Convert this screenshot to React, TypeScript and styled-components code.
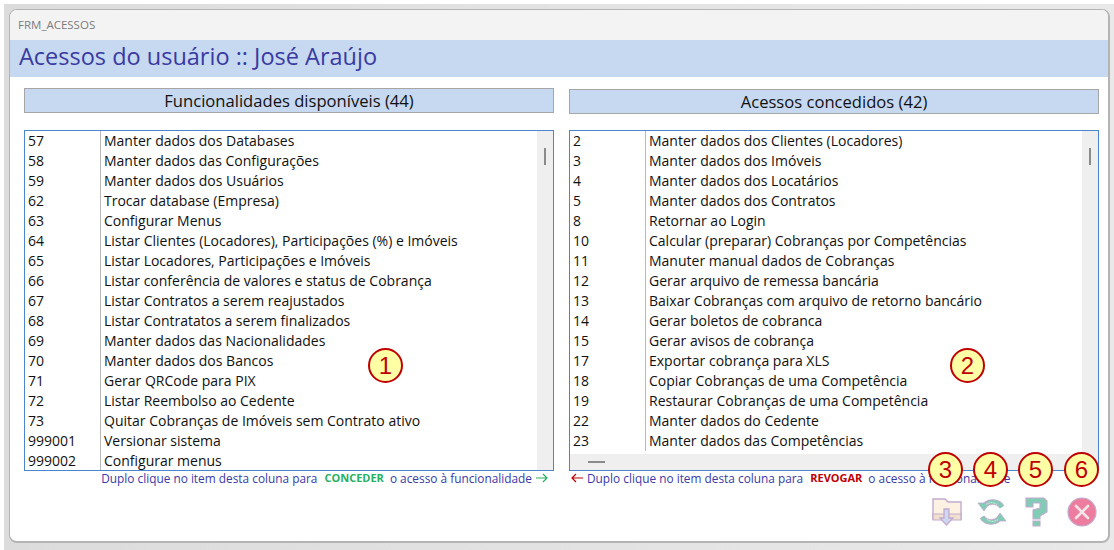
import React from "react";
import styled, { createGlobalStyle } from "styled-components";

const Global = createGlobalStyle`
  html, body { margin: 0; padding: 0; background: #fff; }
  #root { width: 1114px; height: 550px; overflow: hidden; }
`;

const FONT = `"Open Sans", "Noto Sans", "Liberation Sans", sans-serif`;

const Backdrop = styled.div`
  width: 1110px;
  height: 546px;
  margin: 4px 0 0 4px;
  padding: 5px 0 0 5px;
  box-sizing: border-box;
  background: linear-gradient(90deg, #dcdcdc 0, #e9e9e9 100%);
`;

const Win = styled.div`
  width: 1101px;
  height: 534px;
  box-sizing: border-box;
  border: 1px solid #b4b4b4;
  border-right-width: 2px;
  border-bottom-width: 2px;
  border-radius: 8px;
  background: #fff;
  overflow: hidden;
  display: flex;
  flex-direction: column;
  font-family: ${FONT};
`;

const TitleBar = styled.div`
  height: 30px;
  flex: none;
  background: #f3f3f3;
  color: #7c7c7c;
  font-size: 11.5px;
  line-height: 30px;
  padding-left: 8px;
`;

const Banner = styled.h1`
  height: 37px;
  flex: none;
  margin: 0;
  background: #c6d9f1;
  color: #3a3aa2;
  font-family: ${FONT};
  font-weight: 400;
  font-size: 23.5px;
  line-height: 33px;
  padding-left: 9px;
`;

const Columns = styled.div`
  display: flex;
  gap: 15px;
  padding: 11px 0 0 14px;
`;

const Column = styled.section`
  width: 530px;
  position: relative;
  display: flex;
  flex-direction: column;
`;

const PanelTitle = styled.div<{ $drop?: boolean }>`
  height: 25px;
  box-sizing: border-box;
  margin: ${(p) => (p.$drop ? "1px 0 16px" : "0 0 17px")};
  background: #c6d9f1;
  border: 1px solid #a6a6a6;
  color: #111;
  font-size: 16.6px;
  line-height: 23px;
  text-align: center;
`;

const ListBox = styled.div`
  height: 341px;
  box-sizing: border-box;
  border: 1px solid #4a86d0;
  display: flex;
  flex-direction: column;
  background: #fff;
`;

const ListMain = styled.div`
  flex: 1;
  min-height: 0;
  display: flex;
`;

const Rows = styled.div`
  flex: 1;
  min-width: 0;
  overflow: hidden;
`;

const Row = styled.div`
  display: flex;
  height: 20px;
  font-size: 14px;
  line-height: 20px;
  color: #111;
  white-space: nowrap;
`;

const IdCell = styled.div`
  width: 76px;
  flex: none;
  box-sizing: border-box;
  padding-left: 3px;
  border-right: 1px solid #b9b9b9;
`;

const NameCell = styled.div`
  padding-left: 3px;
`;

const VScroll = styled.div`
  width: 16px;
  flex: none;
  background: #efefef;
  padding: 17px 0 0 7px;
  box-sizing: border-box;
`;

const VThumb = styled.div`
  width: 2px;
  height: 17px;
  background: #8b8b8b;
`;

const HScroll = styled.div`
  height: 16px;
  flex: none;
  background: #efefef;
  padding: 7px 0 0 18px;
  box-sizing: border-box;
`;

const HThumb = styled.div`
  width: 17px;
  height: 2px;
  background: #8b8b8b;
`;

const Note = styled.div<{ $end?: boolean }>`
  display: flex;
  justify-content: ${(p) => (p.$end ? "flex-end" : "flex-start")};
  align-items: center;
  gap: 4px;
  height: 13px;
  padding: ${(p) => (p.$end ? "0 6px 0 0" : "0 0 0 2px")};
  color: #3a3aa8;
  font-size: 11.85px;
  white-space: pre;
`;

const Strong = styled.b<{ $c: string }>`
  color: ${(p) => p.$c};
  font-weight: 700;
  font-size: 11px;
  margin: 0 2px 0 3px;
`;

const Marker = styled.div<{ $x: number; $y: number }>`
  position: absolute;
  left: ${(p) => p.$x}px;
  top: ${(p) => p.$y}px;
  width: 35px;
  height: 35px;
  box-sizing: border-box;
  border: 2px solid #c00000;
  border-radius: 50%;
  background: #ffffa6;
  color: #c00000;
  font-family: "Liberation Sans", Arial, sans-serif;
  font-size: 24px;
  line-height: 31px;
  text-align: center;
`;

const Footer = styled.div`
  display: flex;
  justify-content: flex-end;
  align-items: center;
  gap: 15px;
  padding: 13px 11px 0 0;
`;

const IconBtn = styled.button`
  border: 0;
  padding: 0;
  width: 30px;
  height: 30px;
  background: none;
  opacity: 0.88;
  svg { display: block; }
`;

const left: [string, string][] = [
  ["57", "Manter dados dos Databases"],
  ["58", "Manter dados das Configurações"],
  ["59", "Manter dados dos Usuários"],
  ["62", "Trocar database (Empresa)"],
  ["63", "Configurar Menus"],
  ["64", "Listar Clientes (Locadores), Participações (%) e Imóveis"],
  ["65", "Listar Locadores, Participações e Imóveis"],
  ["66", "Listar conferência de valores e status de Cobrança"],
  ["67", "Listar Contratos a serem reajustados"],
  ["68", "Listar Contratatos a serem finalizados"],
  ["69", "Manter dados das Nacionalidades"],
  ["70", "Manter dados dos Bancos"],
  ["71", "Gerar QRCode para PIX"],
  ["72", "Listar Reembolso ao Cedente"],
  ["73", "Quitar Cobranças de Imóveis sem Contrato ativo"],
  ["999001", "Versionar sistema"],
  ["999002", "Configurar menus"],
];

const right: [string, string][] = [
  ["2", "Manter dados dos Clientes (Locadores)"],
  ["3", "Manter dados dos Imóveis"],
  ["4", "Manter dados dos Locatários"],
  ["5", "Manter dados dos Contratos"],
  ["8", "Retornar ao Login"],
  ["10", "Calcular (preparar) Cobranças por Competências"],
  ["11", "Manuter manual dados de Cobranças"],
  ["12", "Gerar arquivo de remessa bancária"],
  ["13", "Baixar Cobranças com arquivo de retorno bancário"],
  ["14", "Gerar boletos de cobranca"],
  ["15", "Gerar avisos de cobrança"],
  ["17", "Exportar cobrança para XLS"],
  ["18", "Copiar Cobranças de uma Competência"],
  ["19", "Restaurar Cobranças de uma Competência"],
  ["22", "Manter dados do Cedente"],
  ["23", "Manter dados das Competências"],
];

const List = ({ rows, hscroll }: { rows: [string, string][]; hscroll?: boolean }) => (
  <ListBox>
    <ListMain>
      <Rows>
        {rows.map(([id, name]) => (
          <Row key={id}>
            <IdCell>{id}</IdCell>
            <NameCell>{name}</NameCell>
          </Row>
        ))}
      </Rows>
      <VScroll>
        <VThumb />
      </VScroll>
    </ListMain>
    {hscroll && (
      <HScroll>
        <HThumb />
      </HScroll>
    )}
  </ListBox>
);

const Arrow = ({ color, flip }: { color: string; flip?: boolean }) => (
  <svg width="12" height="10" viewBox="0 0 12 10" style={flip ? { transform: "scaleX(-1)" } : undefined}>
    <path d="M0 5h11M7 1l4 4-4 4" fill="none" stroke={color} strokeWidth="1.2" />
  </svg>
);

const Outline = "#bb9fc9";
const Teal = "#6fc6aa";

const FolderIcon = () => (
  <svg width="30" height="30" viewBox="0 0 30 30">
    <path d="M1 2h12l3 3h13v17H1z" fill="#fdf0df" stroke={Outline} strokeWidth="1.4" />
    <path d="M1 17h28v6H1z" fill="#efdcc8" stroke={Outline} strokeWidth="1.2" />
    <path d="M12 12h5v9h4l-6.500 7-6.500-7h4z" fill="#c6d3ee" stroke={Outline} strokeWidth="1.3" />
  </svg>
);

const RefreshIcon = () => (
  <svg width="30" height="30" viewBox="0 0 30 30">
    <path d="M6 11a11 11 0 0 1 19-1" fill="none" stroke={Outline} strokeWidth="5.500" />
    <path d="M24 19a11 11 0 0 1-19 1" fill="none" stroke={Outline} strokeWidth="5.500" />
    <path d="M6 11a11 11 0 0 1 19-1" fill="none" stroke={Teal} strokeWidth="3.500" />
    <path d="M24 19a11 11 0 0 1-19 1" fill="none" stroke={Teal} strokeWidth="3.500" />
    <path d="M1 6h11l-5 8z" fill={Teal} stroke={Outline} strokeWidth="0.8" />
    <path d="M29 24H18l5-8z" fill={Teal} stroke={Outline} strokeWidth="0.8" />
    <path d="M9 7.500a9 9 0 0 1 11 0M21 22.500a9 9 0 0 1-11 0" fill="none" stroke="#f4f4f4" strokeWidth="0.9" strokeDasharray="1.500 1" />
  </svg>
);

const HelpIcon = () => (
  <svg width="30" height="30" viewBox="0 0 30 30">
    <path
      d="M4 1H22L25 4V15L18 19V22H11V13L18 11V6H11V10H4ZM11 24h7v5h-7z"
      fill={Teal}
      stroke={Outline}
      strokeWidth="1.1"
    />
  </svg>
);

const CloseIcon = () => (
  <svg width="30" height="30" viewBox="0 0 30 30">
    <circle cx="15" cy="15" r="14" fill="#ea6c92" stroke={Outline} strokeWidth="1.2" />
    <path d="M9 9l12 12M21 9L9 21" stroke="#f6e3e3" strokeWidth="2.600" strokeLinecap="round" />
  </svg>
);

export default function App() {
  return (
    <Backdrop>
      <Global />
      <Win>
        <TitleBar>FRM_ACESSOS</TitleBar>
        <Banner>Acessos do usuário :: José Araújo</Banner>
        <Columns>
          <Column>
            <PanelTitle>Funcionalidades disponíveis (44)</PanelTitle>
            <List rows={left} />
            <Note $end>
              Duplo clique no item desta coluna para
              <Strong $c="#27b05f">CONCEDER</Strong>o acesso à funcionalidade
              <Arrow color="#27b05f" />
            </Note>
            <Marker $x={344} $y={260}>1</Marker>
          </Column>
          <Column>
            <PanelTitle $drop>Acessos concedidos (42)</PanelTitle>
            <List rows={right} hscroll />
            <Note>
              <Arrow color="#c00000" flip />
              Duplo clique no item desta coluna para
              <Strong $c="#c00000">REVOGAR</Strong>o acesso à funcionalidade
            </Note>
            <Marker $x={381} $y={260}>2</Marker>
            <Marker $x={359} $y={364}>3</Marker>
            <Marker $x={404} $y={364}>4</Marker>
            <Marker $x={449} $y={364}>5</Marker>
            <Marker $x={495} $y={364}>6</Marker>
          </Column>
        </Columns>
        <Footer>
          <IconBtn><FolderIcon /></IconBtn>
          <IconBtn><RefreshIcon /></IconBtn>
          <IconBtn><HelpIcon /></IconBtn>
          <IconBtn><CloseIcon /></IconBtn>
        </Footer>
      </Win>
    </Backdrop>
  );
}
